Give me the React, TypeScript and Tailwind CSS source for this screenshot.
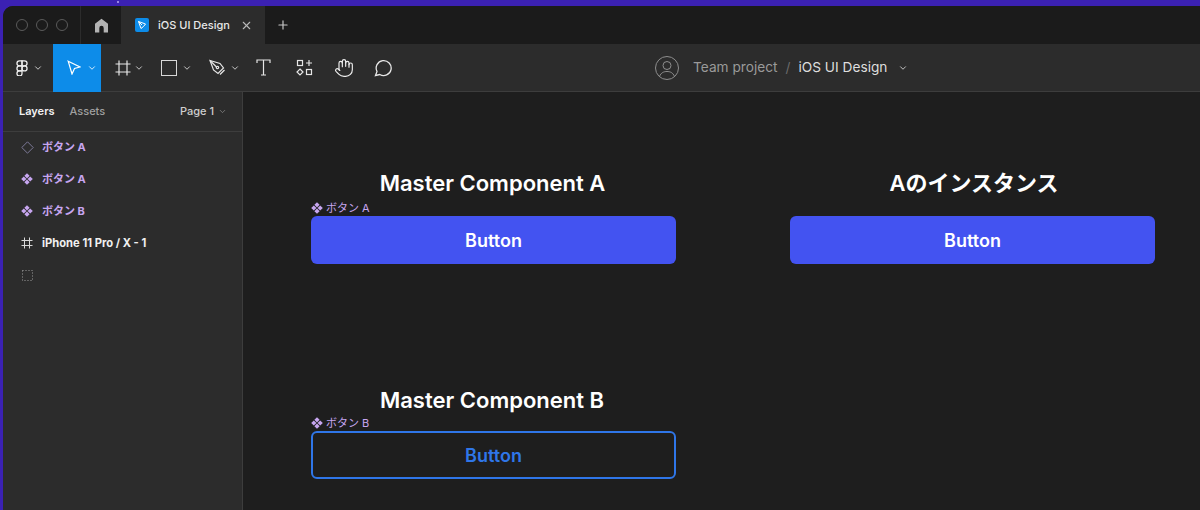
import React from "react";
import { ChevronDown, X, Plus, Hand } from "lucide-react";

const Chev = ({ className = "text-[#e6e6e6]" }: { className?: string }) => (
  <ChevronDown size={10} strokeWidth={2} className={className} />
);

const ComponentIcon = ({ size = 12, color = "#c7a6f0" }: { size?: number; color?: string }) => (
  <svg width={size} height={size} viewBox="0 0 12 12" fill={color}>
    <path d="M6 .2 8.600 2.800 6 5.400 3.400 2.800Z" />
    <path d="M6 6.600 8.600 9.200 6 11.800 3.400 9.200Z" />
    <path d="M2.800 3.400 5.400 6 2.800 8.600.2 6Z" />
    <path d="M9.200 3.400 11.800 6 9.200 8.600 6.600 6Z" />
  </svg>
);

function FigmaLogo() {
  return (
    <svg width="12" height="16" viewBox="0 0 14 19" fill="none" stroke="#eee" strokeWidth="1.500">
      <path d="M7 1H4a3 3 0 0 0 0 6h3V1Z" />
      <path d="M7 1h3a3 3 0 0 1 0 6H7V1Z" />
      <path d="M7 7H4a3 3 0 0 0 0 6h3V7Z" />
      <circle cx="10" cy="10" r="3" />
      <path d="M7 13H4a3 3 0 1 0 3 3v-3Z" />
    </svg>
  );
}

function TabBar() {
  return (
    <div className="flex h-[38px] bg-[#1b1b1b] text-[#e8e8e8]">
      <div className="flex w-[78px] items-center gap-[8px] pl-[13px] border-r border-[#2c2c2c]">
        <span className="size-[12px] rounded-full border border-[#5a5a5a]" />
        <span className="size-[12px] rounded-full border border-[#5a5a5a]" />
        <span className="size-[12px] rounded-full border border-[#5a5a5a]" />
      </div>
      <div className="flex w-[40px] items-center justify-center">
        <svg width="15" height="15" viewBox="0 0 15 15" fill="#b3b3b3">
          <path d="M7.500.8 14 5.800V14.500H9.700V10A2.200 2.200 0 0 0 5.300 10V14.500H1V5.800Z" />
        </svg>
      </div>
      <div className="flex w-[144px] items-center bg-[#2c2c2c] pl-[14px]">
        <span className="flex size-[14px] items-center justify-center rounded-[2px] bg-[#0d8ce9]">
          <svg width="10" height="10" viewBox="0 0 10 10" fill="none" stroke="#fff" strokeWidth="1">
            <path d="M1.500 1.500 8.500 4 6.500 6.500 4 8.500Z" />
            <path d="M1.500 1.500 5 5" />
          </svg>
        </span>
        <span className="ml-[9px] text-[11px] font-medium">iOS UI Design</span>
        <X size={13} strokeWidth={2} className="ml-[10px] text-[#b8b8b8]" />
      </div>
      <div className="flex w-[36px] items-center justify-center">
        <Plus size={14} strokeWidth={2} className="text-[#c8c8c8]" />
      </div>
    </div>
  );
}

function ToolBar() {
  return (
    <div className="flex h-[48px] items-center border-b border-[#3d3d3d] bg-[#2c2c2c] text-[#e8e8e8]">
      <div className="flex w-[50px] items-center gap-[5px] pl-[13px]">
        <FigmaLogo />
        <Chev />
      </div>
      <div className="flex h-[48px] w-[48px] items-center bg-[#0d8ce9] pl-[14px]">
        <svg width="14" height="15" viewBox="0 0 14 15" fill="none" stroke="#fff" strokeWidth="1.200">
          <path d="M1.200 1.200 13 7 7.500 8.500 5 14Z" />
        </svg>
        <Chev className="ml-[6px] text-white" />
      </div>
      <div className="flex items-center gap-[3px] pl-[14px]">
        <svg width="16" height="16" viewBox="0 0 16 16" fill="none" stroke="#e6e6e6" strokeWidth="1.200">
          <path d="M4 0.500V15.500M12 0.500V15.500M0.500 4H15.500M0.500 12H15.500" />
        </svg>
        <Chev />
      </div>
      <div className="flex items-center gap-[5px] pl-[17px]">
        <span className="size-[16px] border-[1.500px] border-[#d8d8d8]" />
        <Chev />
      </div>
      <div className="flex items-center gap-[4px] pl-[17px]">
        <svg width="17" height="17" viewBox="0 0 17 17" fill="none" stroke="#e6e6e6" strokeWidth="1.200">
          <path d="M1 1.500 11 4.500 14.500 9 9 14.500 4.500 11Z" />
          <path d="M1 1.500 7.500 8" />
          <circle cx="8.500" cy="8.500" r="1.200" />
          <path d="M11 15.500 15.500 11" />
        </svg>
        <Chev />
      </div>
      <div className="flex w-[40px] items-center pl-[14px]">
        <svg width="19" height="19" viewBox="0 0 19 19" fill="none" stroke="#e6e6e6" strokeWidth="1.200">
          <path d="M3 5V2H16V5M9.500 2V17M7 17H12" />
        </svg>
      </div>
      <div className="flex w-[40px] items-center pl-[16px]">
        <svg width="17" height="17" viewBox="0 0 17 17" fill="none" stroke="#e6e6e6" strokeWidth="1.200">
          <rect x="1.500" y="1.500" width="5" height="5" />
          <rect x="10.500" y="10.500" width="5" height="5" />
          <path d="M4 10 7 13 4 16 1 13Z" />
          <path d="M13 1V7M10 4H16" />
        </svg>
      </div>
      <div className="flex w-[39px] items-center pl-[14px]">
        <Hand size={20} strokeWidth={1.4} className="text-[#eeeeee]" />
      </div>
      <div className="flex items-center pl-[15px]">
        <svg width="18" height="18" viewBox="0 0 18 18" fill="none" stroke="#e6e6e6" strokeWidth="1.300">
          <path d="M1.500 16.500 3 12.500A7.500 7.500 0 1 1 5.800 15.500Z" />
        </svg>
      </div>
      <div className="ml-[263px] flex items-center text-[13.700px]">
        <svg width="24" height="24" viewBox="0 0 24 24" fill="none" stroke="#8e8e8e" strokeWidth="1">
          <circle cx="12" cy="12" r="11.500" />
          <circle cx="12" cy="9.500" r="4" />
          <path d="M4.500 20.500C6 16.500 9 15.500 12 15.500S18 16.500 19.500 20.500" />
        </svg>
        <span className="ml-[14px] text-[#9a9a9a]">Team project</span>
        <span className="ml-[8px] text-[#6a6a6a]">/</span>
        <span className="ml-[8px] text-[#dedede]">iOS UI Design</span>
        <ChevronDown size={10} strokeWidth={2} className="ml-[11px] text-[#dedede]" />
      </div>
    </div>
  );
}

function LayerRow({ icon, label, white }: { icon: React.ReactNode; label: string; white?: boolean }) {
  return (
    <div className="flex h-[32px] items-center">
      <span className="flex w-[39px] justify-center pl-[9px]">{icon}</span>
      <span className={white ? "text-[11.200px] font-bold text-[#f0f0f0]" : "text-[11px] font-bold text-[#c7a6f0]"}>
        {label}
      </span>
    </div>
  );
}

function Sidebar() {
  return (
    <div className="w-[240px] shrink-0 border-r border-[#3d3d3d] bg-[#2c2c2c]">
      <div className="flex h-[40px] items-center border-b border-[#3d3d3d] pl-[16px] pr-[15px] text-[11px] font-medium">
        <span className="font-semibold text-[#f2f2f2]">Layers</span>
        <span className="ml-[15px] text-[#a0a0a0]">Assets</span>
        <span className="ml-auto text-[#cfcfcf]">Page 1</span>
        <ChevronDown size={9} className="ml-[4px] text-[#8a8a8a]" />
      </div>
      <div className="-mt-px">
        <LayerRow
          label="ボタン A"
          icon={
            <svg width="13" height="13" viewBox="0 0 13 13" fill="none" stroke="#7d7a99" strokeWidth="1">
              <path d="M6.500 .8 12.200 6.500 6.500 12.200 .8 6.500Z" />
            </svg>
          }
        />
        <LayerRow label="ボタン A" icon={<ComponentIcon />} />
        <LayerRow label="ボタン B" icon={<ComponentIcon />} />
        <LayerRow
          white
          label="iPhone 11 Pro / X - 1"
          icon={
            <svg width="12" height="12" viewBox="0 0 12 12" fill="none" stroke="#d8d8d8" strokeWidth="1">
              <path d="M3.500 .5V11.500M8.500 .5V11.500M.5 3.500H11.500M.5 8.500H11.500" />
            </svg>
          }
        />
        <LayerRow
          label=""
          icon={
            <svg width="11" height="11" viewBox="0 0 11 11" fill="none" stroke="#9a9a9a" strokeWidth="1" strokeDasharray="1 2">
              <rect x=".5" y=".5" width="10" height="10" />
            </svg>
          }
        />
      </div>
    </div>
  );
}

function ComponentLabel({ text, className }: { text: string; className: string }) {
  return (
    <div className={`flex h-[16px] items-center gap-[3px] text-[11px] text-[#c7a6f0] ${className}`}>
      <ComponentIcon />
      <span>{text}</span>
    </div>
  );
}

function Canvas() {
  const title = "text-center text-[22px] leading-[28px] font-semibold text-white";
  const solid = "flex h-[48px] items-center justify-center rounded-[6px] bg-[#4353f1] text-[18px] font-semibold text-white";
  return (
    <div className="grid flex-1 grid-cols-[365px_365px] content-start gap-x-[114px] pl-[68px] pt-[77px]">
      <div className="h-[217px]">
        <h2 className={`${title} pr-[2px]`}>Master Component A</h2>
        <ComponentLabel text="ボタン A" className="mt-[3px]" />
        <div className={solid}>Button</div>
      </div>
      <div className="h-[217px]">
        <h2 className={`${title} pl-[3px]`}>Aのインスタンス</h2>
        <div className="h-[19px]" />
        <div className={solid}>Button</div>
      </div>
      <div>
        <h2 className={`${title} pr-[3px]`}>Master Component B</h2>
        <ComponentLabel text="ボタン B" className="mt-[1px]" />
        <div className="flex h-[48px] items-center justify-center rounded-[6px] border-2 border-[#2f76e8] text-[18px] font-semibold text-[#2f76e8]">
          Button
        </div>
      </div>
    </div>
  );
}

export default function App() {
  return (
    <div className="relative h-[510px] w-[1200px] overflow-hidden bg-[#3b21b3] pl-[3px] pt-[6px] font-['Inter','Noto_Sans_CJK_JP',sans-serif]">
      <span className="absolute left-[117px] top-[1px] size-[2px] rounded-full bg-[#b9a8f0]" />
      <div className="flex h-[504px] flex-col overflow-hidden rounded-tl-[10px] bg-[#1e1e1e]">
        <TabBar />
        <ToolBar />
        <div className="flex flex-1">
          <Sidebar />
          <Canvas />
        </div>
      </div>
    </div>
  );
}
